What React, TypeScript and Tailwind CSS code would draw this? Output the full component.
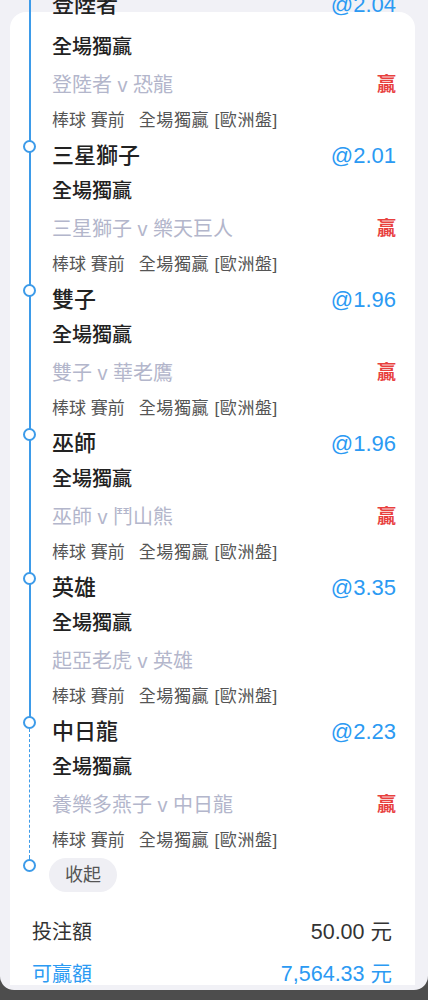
import React from "react";

type Bet = {
  team: string;
  odds: string;
  match: string;
  win: boolean;
};

const bets: Bet[] = [
  { team: "登陸者", odds: "@2.04", match: "登陸者 v 恐龍", win: true },
  { team: "三星獅子", odds: "@2.01", match: "三星獅子 v 樂天巨人", win: true },
  { team: "雙子", odds: "@1.96", match: "雙子 v 華老鷹", win: true },
  { team: "巫師", odds: "@1.96", match: "巫師 v 鬥山熊", win: true },
  { team: "英雄", odds: "@3.35", match: "起亞老虎 v 英雄", win: false },
  { team: "中日龍", odds: "@2.23", match: "養樂多燕子 v 中日龍", win: true },
];

const font = "font-['Liberation_Sans','Noto_Sans_CJK_TC',sans-serif]";

const Dot = ({ top }: { top: string }) => (
  <span
    className={`absolute left-[13px] ${top} h-[13px] w-[13px] rounded-full border-2 border-[#3d9be9] bg-white`}
  />
);

const BetItem = ({
  bet,
  first,
  last,
}: {
  bet: Bet;
  first: boolean;
  last: boolean;
}) => (
  <div className="flex">
    <div className="relative w-[42px] shrink-0">
      {last ? (
        <>
          <span className="absolute left-[18.5px] top-0 h-[9px] w-[2px] bg-[#3d9be9]" />
          <span className="absolute bottom-0 left-[19px] top-[15px] border-l border-dashed border-[#3d9be9]" />
        </>
      ) : (
        <span className="absolute bottom-0 left-[18.5px] top-0 w-[2px] bg-[#3d9be9]" />
      )}
      {!first && <Dot top="top-[2px]" />}
    </div>
    <div className="flex-1 pr-[19px]">
      <div
        className={`flex h-[34px] items-center justify-between ${first ? "pb-[14px]" : ""}`}
      >
        <span className="text-[22px] font-medium text-[#222]">{bet.team}</span>
        <span className="text-[22px] text-[#2b9af3]">{bet.odds}</span>
      </div>
      <div className="flex h-[38px] items-center">
        <span className="text-[20px] font-medium text-[#222]">全場獨贏</span>
      </div>
      <div className="flex h-[38px] items-center justify-between">
        <span className="text-[20px] text-[#b3b6cb]">{bet.match}</span>
        {bet.win && (
          <span className="text-[19px] font-bold text-[#e8403e]">贏</span>
        )}
      </div>
      <div className="flex h-[34px] items-center text-[17px] text-[#555]">
        <span>棒球 賽前</span>
        <span className="ml-[14px] tracking-[0.6px]">全場獨贏 [歐洲盤]</span>
      </div>
    </div>
  </div>
);

export default function App() {
  return (
    <div className={`h-[1000px] bg-[#4d4d4d] ${font}`}>
      <div className="h-[990px] overflow-hidden rounded-b-[14px] bg-[#f1f1f6]">
        <div className="h-[985px] overflow-hidden pt-3">
          <div className="ml-[10px] mr-[13px] flex flex-col rounded-t-[16px] bg-white">
            <div className="-mt-[18px]">
              {bets.map((bet, i) => (
                <BetItem
                  key={bet.team}
                  bet={bet}
                  first={i === 0}
                  last={i === bets.length - 1}
                />
              ))}
              <div className="flex">
                <div className="relative w-[42px] shrink-0">
                  <span className="absolute left-[19px] top-0 h-[2px] border-l border-dashed border-[#3d9be9]" />
                  <Dot top="top-[1px]" />
                </div>
                <button className="-ml-[3px] h-[34px] rounded-full bg-[#efeff4] px-4 text-[18px] text-[#555]">
                  收起
                </button>
              </div>
            </div>
            <div className="pl-[22px] pr-[23px] pt-[19px]">
              <div className="flex h-[42px] items-center justify-between text-[#333]">
                <span className="text-[20px]">投注額</span>
                <span className="text-[21.5px]">50.00 元</span>
              </div>
              <div className="flex h-[42px] items-center justify-between text-[#2b9af3]">
                <span className="text-[20px]">可贏額</span>
                <span className="text-[21.5px]">7,564.33 元</span>
              </div>
            </div>
          </div>
        </div>
      </div>
    </div>
  );
}
